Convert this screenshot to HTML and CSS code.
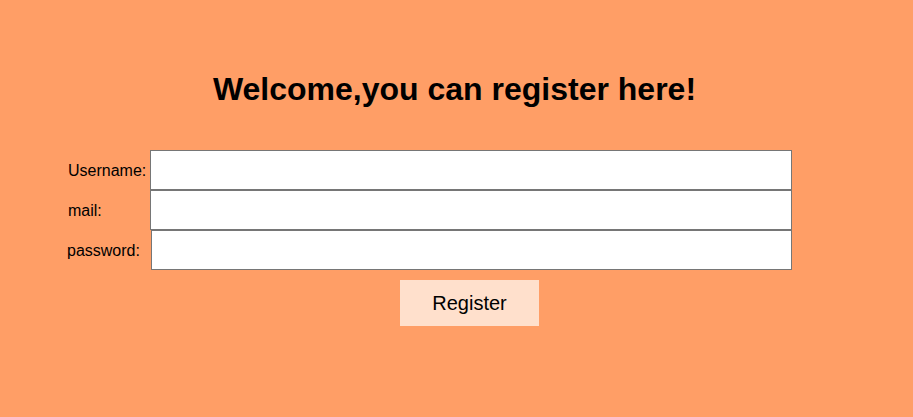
FILE: index.html
```html
<!DOCTYPE html>
<html>
<head>
<meta charset="utf-8">
<title>Register</title>
<link rel="stylesheet" href="styles.css">
</head>
<body>
<h1 class="title">Welcome,you can register here!</h1>
<form class="form">
  <label class="label" for="u">Username:</label>
  <input class="field" id="u" type="text">
  <label class="label" for="m">mail:</label>
  <input class="field" id="m" type="text">
  <label class="label label-shift" for="p">password:</label>
  <input class="field field-shift" id="p" type="password">
  <button class="btn" type="button">Register</button>
</form>
</body>
</html>
```
FILE: styles.css
```css
html, body {
  margin: 0;
  padding: 0;
}
body {
  background: #ff9e66;
  font-family: "Liberation Sans", Arial, sans-serif;
  color: #000;
  width: 913px;
  height: 417px;
  overflow: hidden;
}
.title {
  margin: 71px 0 0;
  font-size: 32px;
  line-height: 37px;
  font-weight: bold;
  text-align: center;
  padding-right: 4px;
}
.form {
  display: grid;
  grid-template-columns: 82px 642px;
  grid-auto-rows: auto;
  padding-left: 68px;
  margin-top: 42px;
}
.label {
  box-sizing: border-box;
  font-size: 16px;
  display: flex;
  align-items: center;
  height: 40px;
  padding-top: 2px;
}
.label-shift {
  margin-left: -1px;
}
.field {
  box-sizing: border-box;
  height: 40px;
  width: 642px;
  margin: 0;
  border: 1px solid #767676;
  background: #fff;
  font-size: 16px;
  padding: 0 4px;
}
.field-shift {
  margin-left: 1px;
  width: 641px;
}
.btn {
  grid-column: 2;
  justify-self: center;
  margin-top: 10px;
  margin-right: 3px;
  box-sizing: border-box;
  width: 139px;
  height: 46px;
  border: none;
  background: #ffe0cc;
  font-family: "Liberation Sans", Arial, sans-serif;
  font-size: 20px;
  color: #000;
  padding: 0;
}
```
